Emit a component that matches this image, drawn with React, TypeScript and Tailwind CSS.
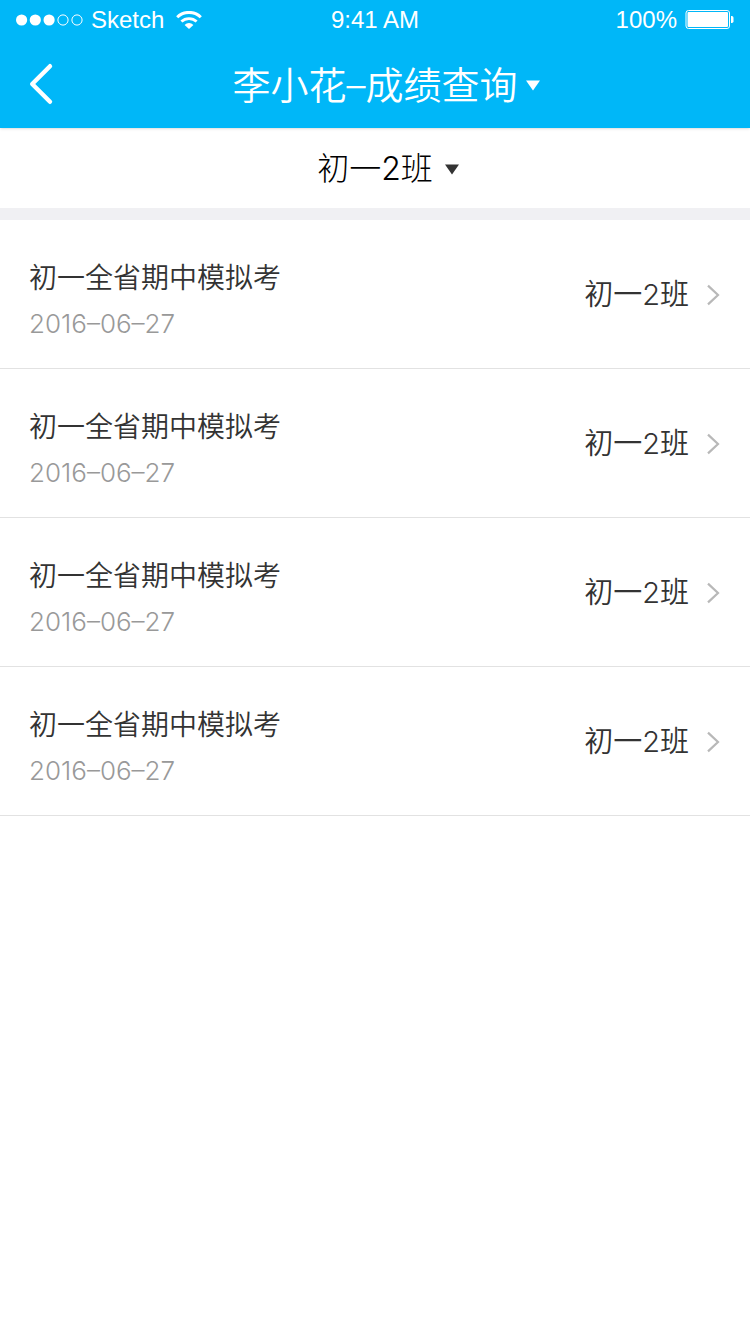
const exams = [
	{ id: 1, name: "初一全省期中模拟考", date: "2016–06–27", className: "初一2班" },
	{ id: 2, name: "初一全省期中模拟考", date: "2016–06–27", className: "初一2班" },
	{ id: 3, name: "初一全省期中模拟考", date: "2016–06–27", className: "初一2班" },
	{ id: 4, name: "初一全省期中模拟考", date: "2016–06–27", className: "初一2班" },
];

const Caret = () => (
	<svg width="14" height="11" viewBox="0 0 14 11" fill="currentColor" aria-hidden="true">
		<path d="M0 0.5h14L7 10.5z" />
	</svg>
);

const Signal = () => (
	<svg width="67" height="12" viewBox="0 0 67 12" fill="none" aria-hidden="true">
		<circle cx="5.6" cy="6" r="5.6" fill="#fff" />
		<circle cx="19.3" cy="6" r="5.6" fill="#fff" />
		<circle cx="33.1" cy="6" r="5.6" fill="#fff" />
		<circle cx="47" cy="6" r="5.1" stroke="#fff" />
		<circle cx="61" cy="6" r="5.1" stroke="#fff" />
	</svg>
);

const Wifi = () => (
	<svg width="26" height="18" viewBox="0 0 26 18" fill="none" aria-hidden="true">
		<path d="M1.2 6.2C7.6-.2 18.4-.2 24.8 6.2" stroke="#fff" strokeWidth="3" />
		<path d="M5.4 10.6C9.6 6.6 16.4 6.6 20.6 10.6" stroke="#fff" strokeWidth="2.8" />
		<path d="M8.6 14C11.1 11.3 14.9 11.3 17.4 14L13 18z" fill="#fff" />
	</svg>
);

const Battery = () => (
	<svg width="49" height="20" viewBox="0 0 49 20" fill="none" aria-hidden="true">
		<rect x="1" y="0.5" width="43.5" height="18" rx="2.5" stroke="#fff" />
		<rect x="2.5" y="2" width="40.5" height="15" rx="1" fill="#fff" />
		<path d="M46 6h.8q1.7 0 1.7 1.7v3.6q0 1.7-1.7 1.7H46z" fill="#fff" />
	</svg>
);

const StatusBar = () => (
	<div className="grid h-10 grid-cols-[1fr_auto_1fr] items-center px-4 text-2xl">
		<div className="flex items-center gap-2">
			<Signal />
			<span className="pr-1">Sketch</span>
			<Wifi />
		</div>
		<span>9:41 AM</span>
		<div className="flex items-center justify-end gap-2">
			<span>100%</span>
			<Battery />
		</div>
	</div>
);

const App = () => {
	return (
		<div className="min-h-screen bg-white font-['Liberation_Sans','Noto_Sans_CJK_SC',sans-serif] text-[#333]">
			<header className="relative bg-[#00b7f8] text-white shadow-sm">
				<StatusBar />
				<div className="flex h-[88px] items-center px-7">
					<button type="button" aria-label="返回" className="w-10">
						<svg width="26" height="42" viewBox="0 0 26 42" fill="none" stroke="#fff" strokeWidth="4.4" strokeLinecap="round" strokeLinejoin="round" aria-hidden="true">
							<path d="M22 3.2L4.2 21L22 38.8" />
						</svg>
					</button>
					<h1 className="flex-1 pr-10 font-['Inter','Noto_Sans_CJK_SC',sans-serif] text-[38px] font-[350]">
						<button type="button" className="grid w-full grid-cols-[1fr_auto_1fr] items-center gap-x-2 pt-0.5">
							<span className="col-start-2">李小花–成绩查询</span>
							<Caret />
						</button>
					</h1>
				</div>
			</header>
			<main className="font-['Inter','Noto_Sans_CJK_SC',sans-serif]">
				<button type="button" className="grid h-20 w-full grid-cols-[1fr_auto_1fr] items-center gap-x-3 pt-0.5 text-[32px] font-light">
					<span className="col-start-2 text-black">初一2班</span>
					<Caret />
				</button>
				<div className="h-3 bg-[#f0f0f3]" />
				<ul>
					{exams.map((exam) => (
						<li key={exam.id} className="border-b border-[#e2e2e2]">
							<a href="#" className="flex items-center justify-between px-[29px] py-7">
								<div>
									<h2 className="text-[28px] font-[350] leading-[60px]">{exam.name}</h2>
									<p className="text-[26px] font-light leading-8 text-[#999]">{exam.date}</p>
								</div>
								<div className="flex items-center gap-4 pt-0.5">
									<span className="text-[29px] font-[350]">{exam.className}</span>
									<svg width="16" height="22" viewBox="0 0 16 22" fill="none" stroke="#b8b8b8" strokeWidth="2.2" aria-hidden="true">
										<path d="M3 1.6L13 11L3 20.4" />
									</svg>
								</div>
							</a>
						</li>
					))}
				</ul>
			</main>
		</div>
	);
};

export default App;
